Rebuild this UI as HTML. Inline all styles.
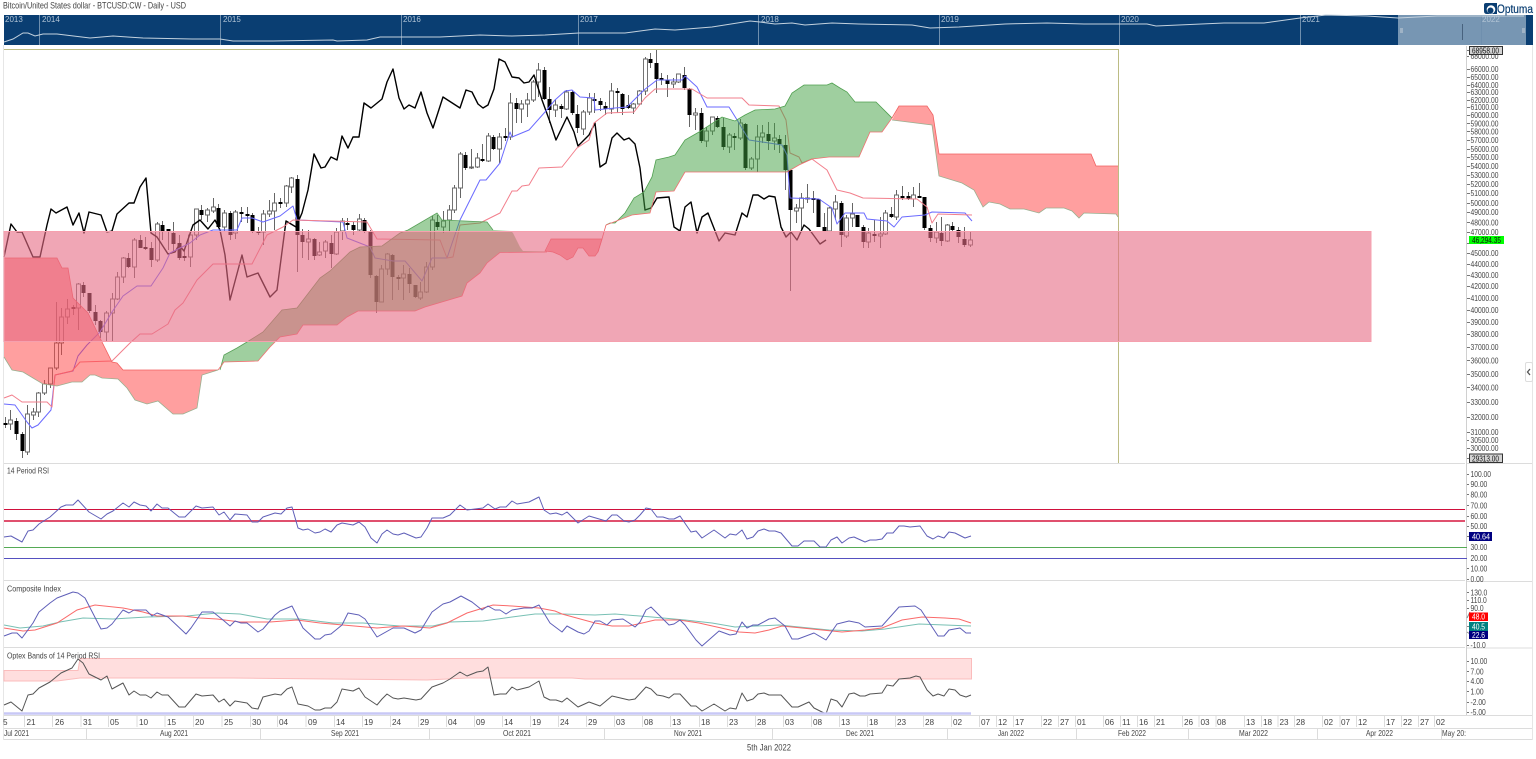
<!DOCTYPE html>
<html><head><meta charset="utf-8"><title>BTCUSD Chart</title>
<style>
html,body{margin:0;padding:0;background:#fff;width:1536px;height:759px;overflow:hidden}
svg{display:block;filter:blur(.35px)}
text{font-family:"Liberation Sans",sans-serif}
</style></head><body>
<svg width="1536" height="759" viewBox="0 0 1536 759" xmlns="http://www.w3.org/2000/svg">
<rect width="1536" height="759" fill="#fff"/>
<text x="3" y="8.500" font-size="9.500" fill="#444" textLength="183" lengthAdjust="spacingAndGlyphs">Bitcoin/United States dollar - BTCUSD:CW - Daily - USD</text>

<!-- navigator -->
<rect x="4" y="15" width="1529" height="30" fill="#0a3e72"/>
<rect x="1398" y="15" width="128" height="30" fill="#7796b3"/>
<path d="M39.500 15V45M220.500 15V45M401.500 15V45M578.500 15V45M758.500 15V45M939.500 15V45M1119.500 15V45M1300.500 15V45M1481.500 15V45" stroke="#6f8fae" stroke-width="1" fill="none"/>
<path d="M1462.500 24V40" stroke="#48627e"/>
<path d="M4 42 13 39 23 33 28 33 35 36 43 34 57 34 90 38 113 36 143 38 192 39 220 39 233 41 273 41 333 40 337 41 367 40 380 37 400 37 440 37 480 35 512 36 545 35 579 33 625 33 655 29 675 30 712 27 750 21 760 22 775 24 792 23 805 25 832 23 859 24 912 25 930 28 959 27 1005 24 1047 23 1084 24 1147 24 1156 26 1224 23 1264 23 1300 18 1326 15 1367 16 1398 18 1437 16 1524 16" fill="none" stroke="#c4d2de" stroke-width="1"/>
<g font-size="8" fill="#b3c5d6">
<text x="5" y="22">2013</text><text x="42" y="22">2014</text><text x="223" y="22">2015</text><text x="403" y="22">2016</text><text x="580" y="22">2017</text><text x="761" y="22">2018</text><text x="941" y="22">2019</text><text x="1121" y="22">2020</text><text x="1302" y="22">2021</text><text x="1482" y="22">2022</text>
</g>
<rect x="1400" y="28" width="3" height="5" fill="#9fb3c6"/><rect x="1522" y="28" width="3" height="5" fill="#9fb3c6"/>

<!-- logo -->
<path d="M1486 3H1497V14H1487Q1484 14 1484 11V5Q1484 3 1486 3Z" fill="#0a3e72"/>
<circle cx="1491" cy="9.500" r="4.300" fill="#fff"/><circle cx="1490.500" cy="10.500" r="3" fill="#0a3e72"/>
<text x="1497" y="13" font-size="11.500" fill="#0a3e72" stroke="#0a3e72" stroke-width=".2" textLength="36" lengthAdjust="spacingAndGlyphs">Optuma</text>

<!-- frame -->
<path d="M3.500 45V740" stroke="#e6e6e6" fill="none"/>
<path d="M1532.500 45V740" stroke="#e6e6e6" fill="none"/>

<!-- candles wicks -->
<path fill="none" stroke="#666" stroke-width="1" d="M5.500 417V428M10.500 410V430M16.500 418V440M22.500 432V458M27.500 405V455M33.500 408V420M38.500 392V417M44.500 380V395M50.500 368V388M56.500 302V370M61.500 308V355M67.500 299V324M73.500 305V315M78.500 283V330M83.500 282V297M89.500 293V313M95.500 305V325M100.500 320V338M106.500 311V342M112.500 293V342M117.500 272V300M123.500 257V283M128.500 253V268M134.500 238V278M140.500 235V248M145.500 237V250M151.500 242V267M157.500 222V262M162.500 221V240M168.500 229V250M173.500 222V253M179.500 235V260M184.500 250V261M190.500 235V267M196.500 209V240M201.500 205V220M207.500 208V222M213.500 198V213M218.500 204V228M224.500 210V232M230.500 211V240M235.500 210V239M241.500 207V222M247.500 207V223M252.500 213V233M258.500 227V235M263.500 210V245M269.500 200V217M274.500 193V230M280.500 198V208M286.500 185V207M291.500 177V193M297.500 175V272M302.500 229V258M308.500 230V260M314.500 238V260M319.500 242V256M325.500 240V258M331.500 235V268M336.500 228V255M342.500 218V240M347.500 218V230M353.500 222V235M359.500 214V232M364.500 218V233M370.500 230V278M376.500 275V313M381.500 265V302M387.500 253V275M392.500 254V300M398.500 275V290M403.500 265V300M409.500 268V293M415.500 285V298M420.500 282V300M426.500 262V293M432.500 216V270M437.500 215V230M443.500 211V233M449.500 205V232M454.500 185V213M460.500 152V198M465.500 152V170M471.500 149V169M477.500 153V168M482.500 144V162M488.500 133V162M493.500 135V150M499.500 133V163M505.500 128V141M510.500 93V140M516.500 98V123M521.500 100V123M527.500 93V117M533.500 80V102M538.500 63V97M544.500 67V100M549.500 87V123M555.500 100V117M561.500 104V118M566.500 90V110M572.500 90V115M577.500 105V133M583.500 110V135M589.500 93V115M594.500 93V113M600.500 98V111M605.500 102V115M611.500 83V114M617.500 88V113M622.500 93V115M628.500 95V109M633.500 103V114M639.500 90V105M645.500 57V95M650.500 53V68M656.500 49V93M661.500 73V85M667.500 75V97M673.500 78V88M678.500 74V83M684.500 67V90M689.500 88V127M695.500 108V130M701.500 108V143M706.500 127V147M712.500 117V135M717.500 116V128M723.500 118V150M729.500 133V153M734.500 133V150M740.500 119V140M745.500 123V170M751.500 157V170M757.500 125V172M762.500 125V143M768.500 122V150M774.500 123V150M779.500 135V153M785.500 135V190M790.500 170V291M796.500 204V223M801.500 193V230M807.500 184V203M813.500 191V213M818.500 199V227M824.500 213V232M829.500 207V232M835.500 195V220M841.500 201V247M846.500 215V238M852.500 203V227M857.500 215V227M863.500 225V248M868.500 228V248M874.500 220V242M880.500 217V248M885.500 210V235M891.500 207V218M896.500 190V220M902.500 186V200M908.500 192V200M913.500 187V207M919.500 183V198M924.500 197V230M930.500 225V242M936.500 222V243M941.500 217V246M947.500 224V242M952.500 222V232M958.500 227V243M964.500 227V247M970.500 232V247"/>
<!-- hollow bodies -->
<path fill="#fff" stroke="#666" stroke-width=".9" d="M8.500 420h4V424h-4zM25.500 414h4V452h-4zM31.500 412h4V415h-4zM36.500 393h4V412h-4zM42.500 384h4V393h-4zM48.500 368h4V384h-4zM54.500 343h4V368h-4zM59.500 317h4V343h-4zM65.500 309h4V317h-4zM76.500 284h4V308h-4zM104.500 313h4V332h-4zM110.500 299h4V313h-4zM115.500 277h4V299h-4zM121.500 258h4V277h-4zM132.500 240h4V267h-4zM155.500 224h4V260h-4zM188.500 235h4V257h-4zM194.500 209h4V235h-4zM205.500 210h4V215h-4zM211.500 207h4V211h-4zM222.500 213h4V227h-4zM233.500 212h4V233h-4zM261.500 214h4V232h-4zM267.500 211h4V214h-4zM272.500 203h4V211h-4zM284.500 186h4V203h-4zM289.500 178h4V187h-4zM306.500 239h4V242h-4zM317.500 252h4V255h-4zM323.500 242h4V251h-4zM334.500 232h4V254h-4zM340.500 221h4V231h-4zM357.500 219h4V230h-4zM379.500 269h4V302h-4zM385.500 254h4V269h-4zM401.500 274h4V278h-4zM418.500 292h4V298h-4zM424.500 267h4V292h-4zM430.500 220h4V267h-4zM441.500 221h4V227h-4zM447.500 210h4V220h-4zM452.500 188h4V210h-4zM458.500 154h4V188h-4zM469.500 167h4V168h-4zM475.500 158h4V167h-4zM486.500 136h4V161h-4zM497.500 137h4V149h-4zM508.500 103h4V137h-4zM519.500 104h4V109h-4zM525.500 100h4V104h-4zM531.500 82h4V100h-4zM536.500 70h4V82h-4zM553.500 105h4V110h-4zM564.500 92h4V109h-4zM581.500 112h4V129h-4zM587.500 98h4V112h-4zM609.500 91h4V109h-4zM631.500 104h4V108h-4zM637.500 91h4V104h-4zM643.500 59h4V91h-4zM671.500 82h4V84h-4zM676.500 74h4V82h-4zM693.500 113h4V115h-4zM704.500 131h4V141h-4zM710.500 117h4V131h-4zM727.500 135h4V147h-4zM738.500 123h4V138h-4zM749.500 159h4V168h-4zM755.500 137h4V159h-4zM760.500 133h4V137h-4zM772.500 138h4V141h-4zM794.500 208h4V211h-4zM799.500 198h4V208h-4zM805.500 198h4V199h-4zM827.500 208h4V231h-4zM833.500 202h4V209h-4zM844.500 218h4V236h-4zM850.500 214h4V218h-4zM866.500 233h4V242h-4zM878.500 234h4V236h-4zM883.500 213h4V234h-4zM894.500 195h4V217h-4zM911.500 195h4V199h-4zM934.500 232h4V238h-4zM945.500 225h4V241h-4zM968.500 240h4V245h-4z"/>
<!-- filled bodies -->
<path fill="#000" d="M3.500 423h4v2h-4zM14.500 421h4V434h-4zM20.500 434h4V451h-4zM71.500 307h4v2h-4zM81.500 285h4V293h-4zM87.500 293h4V311h-4zM93.500 312h4V321h-4zM98.500 321h4V332h-4zM126.500 258h4V267h-4zM138.500 240h4V248h-4zM143.500 247h4v2h-4zM149.500 248h4V260h-4zM160.500 225h4V232h-4zM166.500 229h4v2h-4zM171.500 233h4V244h-4zM177.500 243h4V258h-4zM182.500 256h4v2h-4zM199.500 210h4V215h-4zM216.500 208h4V227h-4zM228.500 213h4V235h-4zM239.500 212h4v2h-4zM245.500 214h4v2h-4zM250.500 215h4V232h-4zM256.500 231h4v2h-4zM278.500 202h4v2h-4zM295.500 179h4V235h-4zM300.500 235h4V242h-4zM312.500 239h4V256h-4zM329.500 243h4V254h-4zM345.500 223h4V225h-4zM351.500 225h4V230h-4zM362.500 220h4V231h-4zM368.500 232h4V275h-4zM374.500 276h4V302h-4zM390.500 255h4V277h-4zM396.500 277h4v2h-4zM407.500 274h4V284h-4zM413.500 285h4V297h-4zM435.500 222h4V227h-4zM463.500 155h4V168h-4zM480.500 159h4v2h-4zM491.500 137h4V149h-4zM503.500 136h4v2h-4zM514.500 103h4V109h-4zM542.500 70h4V99h-4zM547.500 99h4V110h-4zM559.500 106h4V109h-4zM570.500 92h4V113h-4zM575.500 114h4V128h-4zM592.500 99h4V101h-4zM598.500 101h4V105h-4zM603.500 106h4V109h-4zM615.500 91h4V93h-4zM620.500 94h4V109h-4zM626.500 105h4V108h-4zM648.500 59h4V63h-4zM654.500 63h4V79h-4zM659.500 78h4v2h-4zM665.500 80h4V84h-4zM682.500 75h4V88h-4zM687.500 89h4V115h-4zM699.500 113h4V141h-4zM715.500 118h4V127h-4zM721.500 127h4V147h-4zM732.500 136h4V138h-4zM743.500 124h4V168h-4zM766.500 134h4V141h-4zM777.500 139h4V144h-4zM783.500 145h4V170h-4zM788.500 170h4V210h-4zM811.500 198h4v2h-4zM816.500 199h4V227h-4zM822.500 227h4V231h-4zM839.500 203h4V235h-4zM855.500 215h4V227h-4zM861.500 227h4V242h-4zM872.500 234h4v2h-4zM889.500 214h4V217h-4zM900.500 196h4v2h-4zM906.500 196h4V199h-4zM917.500 196h4v2h-4zM922.500 197h4V228h-4zM928.500 228h4V238h-4zM939.500 233h4V241h-4zM950.500 226h4V230h-4zM956.500 230h4V237h-4zM962.500 239h4V245h-4z"/>

<!-- chikou -->
<path fill="none" stroke="#000" stroke-width="1.400" stroke-linejoin="round" d="M4 257 11 224 17 232 22 232 33 257 40 257 47 225 51 209 56 213 67 207 73 225 79 213 84 233 89 212 101 215 107 232 112 231 117 214 129 203 134 203 140 187 146 178 151 233 157 237 168 254 175 252 179 245 184 251 193 225 200 220 208 229 215 220 220 230 225 255 230 300 242 255 247 277 258 273 270 297 277 290 286 221 296 227 302 213 308 190 314 154 321 168 325 167 331 157 337 160 342 136 348 148 353 137 359 137 364 103 371 108 382 99 387 82 393 69 399 98 404 109 409 105 415 108 421 92 427 113 433 128 443 97 460 108 466 90 472 92 478 104 483 108 488 105 494 89 499 59 505 62 512 77 519 78 524 83 529 82 534 75 542 100 550 122 556 140 567 117 574 132 578 146 584 140 589 135 595 123 600 167 606 163 612 138 617 133 624 140 629 138 635 144 640 168 645 210 651 208 657 198 669 197 674 227 680 231 685 207 691 202 697 233 702 217 708 213 719 241 725 233 735 235 742 213 747 217 753 195 758 195 764 199 769 196 775 197 781 227 786 237 791 232 797 240 804 225 809 229 820 244 826 240"/>
<!-- tenkan -->
<path fill="none" stroke="#6a6aff" stroke-width="1" stroke-linejoin="round" d="M4 404 15 405 27 422 32 428 38 425 51 410 55 375 73 371 78 356 87 345 100 332 112 312 123 296 137 286 151 286 163 268 170 253 190 243 200 235 213 230 237 230 242 218 252 218 263 222 280 216 293 206 297 220 343 222 347 238 370 247 375 258 393 261 405 261 422 281 432 258 447 258 460 220 480 180 486 180 500 163 510 132 512 137 529 130 545 112 555 100 565 91 572 90 580 97 594 98 595 110 615 108 627 107 644 90 657 80 682 80 685 76 697 87 707 107 729 107 739 123 749 140 769 143 782 145 787 155 790 198 819 199 832 208 837 224 845 213 864 213 867 219 887 221 894 227 902 217 925 215 932 212 965 213 972 221"/>
<!-- kijun -->
<path fill="none" stroke="#f27f8c" stroke-width="1" stroke-linejoin="round" d="M4 398 12 395 22 402 47 402 52 407 55 375 72 371 80 362 112 361 130 343 140 334 152 334 168 324 175 310 183 303 197 280 213 264 252 264 267 235 283 227 293 220 367 222 377 239 440 240 447 258 453 257 460 225 480 223 500 213 512 191 517 191 522 186 529 185 539 168 562 167 577 148 589 140 594 123 607 113 634 112 645 98 655 89 692 89 707 98 742 98 749 105 779 106 786 120 790 153 799 157 802 163 812 159 827 170 837 190 850 193 863 198 917 199 927 207 932 223 938 214 972 215"/>

<!-- olive border -->
<path d="M4 49.500H1118.500V463" fill="none" stroke="#bcbc84" stroke-width="1"/>

<!-- cloud red left -->
<path fill="#ff4040" fill-opacity=".5" d="M4 258 57 258 62 268 68 268 73 298 88 313 100 338 112 362 117 363 123 370 218 370 202 375 197 408 183 414 173 414 158 401 147 404 135 400 127 388 118 379 102 378 95 375 90 375 82 382 72 382 57 386 43 384 33 378 23 372 12 370 4 357z"/>
<path fill="none" stroke="#f26060" stroke-width=".8" d="M4 258 57 258 62 268 68 268 73 298 88 313 100 338 112 362 117 363 123 370 218 370"/>
<path fill="none" stroke="#9ab090" stroke-width=".8" d="M4 357 12 370 23 372 33 378 43 384 57 386 72 382 82 382 90 375 95 375 102 378 118 379 127 388 135 400 147 404 158 401 173 414 183 414 197 408 202 375 218 370"/>
<!-- cloud green -->
<path fill="#40a040" fill-opacity=".5" d="M220 370 224 355 237 348 247 342 263 332 282 310 297 308 320 278 330 271 350 252 360 247 382 246 400 233 408 230 437 213 442 220 487 222 493 230 511 231 513 233 520 247 523 251 545 251.500 545 252.500 500 252.500 487 263 480 273 467 283 462 296 425 307 415 311 358 311 347 317 337 325 303 325 297 334 280 337 270 347 258 361 224 362z"/>
<path fill="none" stroke="#58a058" stroke-width=".8" d="M220 370 224 355 237 348 247 342 263 332 282 310 297 308 320 278 330 271 350 252 360 247 382 246 400 233 408 230 437 213 442 220 487 222 493 230"/>
<path fill="none" stroke="#f07070" stroke-width=".8" d="M218 370 224 362 258 361 270 347 280 337 297 334 303 325 337 325 347 317 358 311 415 311 425 307 462 296 467 283 480 273 487 263 500 252.500 547 252"/>
<!-- small red -->
<path fill="#ff4040" fill-opacity=".5" stroke="#f06060" stroke-width=".7" d="M545 251 551 239 602 239 598 252 595 256 589 256 583 248 578 248 573 257 567 260 560 255 553 252z"/>
<path fill="none" stroke="#f06060" stroke-width=".8" d="M598 252 602 239 606 225"/>
<!-- cloud green 2 -->
<path fill="#40a040" fill-opacity=".5" d="M606 225 610 223 615 223 625 213 634 198 644 192 652 177 656 160 669 157 675 155 685 140 699 132 722 117 735 121 745 115 755 110 775 109 785 106 792 93 804 85 827 85 832 83 840 88 847 92 855 102 876 102 892 118 882 132 870 132 859 157 829 157 812 159 799 165 787 172 685 172 674 191 656 192 650 213 632 215z"/>
<path fill="none" stroke="#50a050" stroke-width=".8" d="M606 225 610 223 615 223 625 213 634 198 644 192 652 177 656 160 669 157 675 155 685 140 699 132 722 117 735 121 745 115 755 110 775 109 785 106 792 93 804 85 827 85 832 83 840 88 847 92 855 102 876 102 892 118"/>
<path fill="none" stroke="#f07070" stroke-width=".8" d="M606 225 632 215 650 213 656 192 674 191 685 172 787 172 799 165 812 159 829 157 859 157 870 132 882 132 892 118"/>
<!-- cloud red right -->
<path fill="#ff4040" fill-opacity=".5" d="M892 120 899 106 927 106 933 115 939 154 1091 154 1096 166 1118 166 1118 217 1116 214 1084 213 1079 218 1072 211 1064 208 1046 208 1039 213 1024 209 1010 209 1000 204 989 202 983 207 974 190 962 183 939 176 932 125z"/>
<path fill="none" stroke="#f06060" stroke-width=".8" d="M892 118 899 106 927 106 933 115 939 154 1091 154 1096 166 1118 166"/>
<path fill="none" stroke="#9ab090" stroke-width=".8" d="M892 120 932 125 939 176 962 183 974 190 983 207 989 202 1000 204 1010 209 1024 209 1039 213 1046 208 1064 208 1072 211 1079 218 1084 213 1116 214 1118 217"/>

<!-- big pink rect -->
<rect x="4" y="231.500" width="1367" height="110" fill="#e66b84" fill-opacity=".6" stroke="#f6a0ae" stroke-width="1"/>

<!-- dividers -->
<path d="M4 463.500H1465M4 580.500H1465M4 647.500H1465M4 715.500H1532M4 728.500H1466M4 739.500H1532M1466 463.500H1532M1466 581.500H1532M1466 648H1532M1466 728.500H1532" stroke="#dcdcdc" fill="none"/>
<path d="M1466.500 46V715" stroke="#d0d0d0" fill="none"/>

<!-- RSI -->
<path d="M4 509.500H1465" stroke="#d0103c" stroke-width="1.100" fill="none"/>
<path d="M4 521H1465" stroke="#e0506e" stroke-width="2" fill="none"/>
<path d="M4 547.500H1467" stroke="#55aa55" stroke-width="1.100" fill="none"/>
<path d="M4 558.500H1467" stroke="#5550c0" stroke-width="1.100" fill="none"/>
<path fill="none" stroke="#5f5fb8" stroke-width="1" stroke-linejoin="round" d="M4 537 11 536 22 542 28 531 33 530 39 524 50 517 61 507 66 505 73 505 78 500 89 512 101 519 107 514 113 511 123 503 129 507 134 502 140 505 146 506 151 511 157 504 162 508 168 508 179 517 185 517 196 506 202 508 213 507 219 515 224 512 230 520 235 514 247 515 252 522 258 522 263 517 275 513 281 514 287 508 292 507 298 528 303 530 308 529 315 533 320 532 325 529 331 532 337 525 342 523 353 525 359 522 365 527 371 538 377 543 382 534 387 530 393 534 398 535 404 533 416 538 421 537 427 528 432 518 443 518 450 515 460 505 467 510 475 509 483 508 488 504 495 509 500 507 506 507 512 501 517 504 529 502 539 497 544 510 550 514 556 513 562 515 567 512 578 523 589 516 606 521 612 515 617 515 624 521 629 522 635 520 640 515 646 508 651 509 657 517 663 517 669 519 674 519 680 516 691 532 696 531 702 538 714 530 725 538 730 534 736 535 742 530 747 539 753 537 758 531 764 529 769 531 775 531 781 533 792 546 798 546 804 541 814 541 820 547 826 547 831 540 837 537 842 543 849 538 854 537 865 542 870 540 876 540 882 539 887 533 893 533 899 526 904 526 910 527 920 526 927 536 933 539 938 536 944 538 949 532 955 533 965 538 971 536"/>

<!-- Composite -->
<path fill="none" stroke="#78c0b4" stroke-width="1" d="M4 625 20 628 43 626 60 622 83 618 113 619 147 617 187 616 217 613 240 614 267 619 300 619 333 623 363 623 400 626 433 626 450 622 483 621 512 617 535 614 562 614 595 615 615 614 652 617 685 620 712 623 735 627 779 625 829 630 862 631 885 629 919 624 945 625 971 626"/>
<path fill="none" stroke="#fa6a6a" stroke-width="1" d="M4 628 23 631 35 630 57 623 77 610 95 605 123 608 143 612 157 616 183 616 200 618 217 619 240 622 270 622 297 620 320 623 343 625 377 628 403 626 430 628 447 623 467 613 493 605 512 606 539 608 555 611 562 614 595 623 612 626 629 626 655 620 679 620 699 623 739 632 755 633 769 630 782 626 812 629 842 632 865 630 882 628 902 620 922 617 945 618 959 619 971 623"/>
<path fill="none" stroke="#5f5fb8" stroke-width="1" stroke-linejoin="round" d="M4 636 12 633 17 633 22 638 33 623 39 612 50 603 57 598 73 592 78 593 85 598 101 629 107 628 112 624 123 610 129 613 134 610 146 610 152 616 157 613 168 617 186 634 191 628 202 612 213 612 223 620 230 626 235 621 241 623 247 623 258 632 263 629 275 615 280 611 292 606 303 628 315 639 320 639 325 635 331 634 342 625 348 613 359 615 365 619 377 637 393 628 404 628 415 633 421 630 432 612 443 604 450 602 461 596 472 602 482 610 488 606 495 610 500 610 506 614 512 610 524 608 532 608 539 605 550 623 562 632 567 626 578 632 584 634 589 631 595 621 600 621 607 625 612 620 623 619 635 627 640 622 646 610 651 607 669 625 674 624 680 620 685 625 696 640 702 646 719 631 730 635 736 634 742 622 747 628 753 625 758 625 769 619 775 618 785 626 792 639 798 639 814 633 826 640 837 624 849 621 859 623 865 627 882 626 899 607 915 606 921 610 938 636 944 636 949 630 960 628 966 633 971 633"/>

<!-- Optex -->
<path fill="#ffdede" stroke="#fbbcbc" stroke-width="1" d="M4 670.500H78L80 658.500H971.500V679H875L585 679 572 678 467 678 427 680 233 678 100 678 80 678 57 681H4z"/>
<path fill="none" stroke="#555" stroke-width="1" stroke-linejoin="round" d="M4 705 11 702 22 711 28 695 33 694 39 688 50 682 61 673 72 668 78 659 83 663 89 674 101 680 107 676 112 689 123 683 129 695 134 691 140 695 146 695 151 698 157 692 162 695 168 695 179 707 185 707 196 694 202 696 213 695 219 702 224 699 230 706 235 701 247 703 252 708 258 709 263 697 275 694 281 695 287 689 292 687 298 704 308 706 315 710 320 710 325 708 331 708 337 702 342 689 353 691 359 688 365 697 377 705 382 699 387 694 393 698 398 699 404 698 416 700 421 699 432 687 443 683 450 679 460 672 467 676 477 672 483 671 488 667 494 695 500 694 506 694 512 687 517 690 529 687 539 681 544 697 550 700 556 700 562 702 567 698 578 707 589 702 600 706 612 696 629 700 635 699 646 687 651 689 657 695 663 696 669 698 674 694 680 694 691 706 696 706 702 711 714 704 725 711 730 708 736 709 742 693 747 701 753 699 758 694 764 693 769 695 781 695 792 707 798 707 809 702 814 708 826 714 831 699 837 701 842 707 849 694 854 693 860 696 865 696 870 694 882 693 887 685 893 686 899 679 910 678 916 676 920 677 927 690 933 696 938 694 944 696 949 689 955 690 960 695 966 697 971 695"/>
<path d="M4 713.500H971" stroke="#c8c8f6" stroke-width="2.500" fill="none"/>

<!-- panel titles -->
<g font-size="8.500" fill="#444">
<text x="7" y="473.500" textLength="42" lengthAdjust="spacingAndGlyphs">14 Period RSI</text>
<text x="7" y="591.500" textLength="54" lengthAdjust="spacingAndGlyphs">Composite Index</text>
<text x="7" y="658.500" textLength="93" lengthAdjust="spacingAndGlyphs">Optex Bands of 14 Period RSI</text>
</g>

<!-- axis ticks -->
<path stroke="#777" stroke-width="1" fill="none" d="M1467 50.500H1469M1467 56.500H1469M1467 69.500H1470M1467 77.500H1470M1467 85.500H1470M1467 92.500H1470M1467 100.500H1470M1467 107.500H1470M1467 115.500H1470M1467 123.500H1470M1467 131.500H1470M1467 140.500H1470M1467 149.500H1470M1467 157.500H1470M1467 166.500H1470M1467 175.500H1470M1467 184.500H1470M1467 193.500H1470M1467 203.500H1470M1467 212.500H1470M1467 222.500H1470M1467 232.500H1470M1467 243.500H1469M1467 253.500H1470M1467 264.500H1470M1467 275.500H1470M1467 286.500H1470M1467 298.500H1470M1467 310.500H1470M1467 322.500H1470M1467 334.500H1470M1467 347.500H1470M1467 360.500H1470M1467 374.500H1470M1467 387.500H1470M1467 402.500H1470M1467 417.500H1470M1467 432.500H1470M1467 440.500H1469M1467 448.500H1470M1467 458.500H1470M1467 474.500H1469M1467 484.500H1469M1467 494.500H1469M1467 505.500H1469M1467 516.500H1469M1467 526.500H1469M1467 536.500H1470M1467 568.500H1469M1467 579.500H1469M1467 592.500H1469M1467 600.500H1469M1467 608.500H1469M1467 645.500H1469M1467 661.500H1469M1467 671.500H1469M1467 681.500H1469M1467 691.500H1469M1467 702.500H1469M1467 712.500H1469"/>
<path d="M1467 618 1470 612M1467 626.500H1470M1467 632 1470 634" stroke="#888" fill="none"/>

<!-- axis labels -->
<g transform="translate(1470.500 0) scale(.78 1)" font-size="8.600" fill="#444">
<text y="59">68000.00</text>
<text y="72">66000.00</text><text y="80">65000.00</text><text y="88">64000.00</text><text y="95">63000.00</text><text y="103">62000.00</text><text y="110">61000.00</text><text y="118">60000.00</text><text y="126.500">59000.00</text><text y="134.500">58000.00</text><text y="143">57000.00</text><text y="152">56000.00</text><text y="160">55000.00</text><text y="169">54000.00</text><text y="178">53000.00</text><text y="187">52000.00</text><text y="196">51000.00</text><text y="206">50000.00</text><text y="215">49000.00</text><text y="225.500">48000.00</text><text y="235">47000.00</text>
<text y="256">45000.00</text><text y="267">44000.00</text><text y="278">43000.00</text><text y="289">42000.00</text><text y="301">41000.00</text><text y="313">40000.00</text><text y="325">39000.00</text><text y="337">38000.00</text><text y="350">37000.00</text><text y="363.500">36000.00</text><text y="377">35000.00</text><text y="390.500">34000.00</text><text y="405">33000.00</text><text y="420">32000.00</text><text y="435">31000.00</text><text y="443">30500.00</text><text y="451">30000.00</text>
<text y="477">100.00</text><text y="487">90.00</text><text y="497.500">80.00</text><text y="508.500">70.00</text><text y="519">60.00</text><text y="529">50.00</text><text y="550">30.00</text><text y="561">20.00</text><text y="571.500">10.00</text><text y="582">0.00</text>
<text y="595.500">130.0</text><text y="603">110.0</text><text y="611">90.0</text><text y="648">-10.0</text>
<text y="664">10.00</text><text y="674.500">7.00</text><text y="684">4.00</text><text y="694.500">1.00</text><text y="705">-2.00</text><text y="715">-5.00</text>
</g>

<!-- value boxes -->
<rect x="1469.500" y="46.500" width="33" height="8" fill="#d4d4d4" stroke="#333"/>
<rect x="1469.500" y="454" width="33" height="8.500" fill="#d4d4d4" stroke="#333"/>
<rect x="1469" y="236" width="35" height="8" fill="#00ff00"/>
<rect x="1469" y="532" width="23" height="9" fill="#000080"/>
<rect x="1469" y="612.500" width="19" height="8.500" fill="#ff0000"/>
<rect x="1469" y="622" width="19" height="9" fill="#008080"/>
<rect x="1469" y="631" width="19" height="8" fill="#000080"/>
<g font-size="8.600">
<text x="1472" y="53.500" fill="#111" textLength="27" lengthAdjust="spacingAndGlyphs">68958.00</text>
<text x="1472" y="461.500" fill="#111" textLength="27" lengthAdjust="spacingAndGlyphs">29313.00</text>
<text x="1472" y="243" fill="#111" textLength="29" lengthAdjust="spacingAndGlyphs">46,294.35</text>
<text x="1472" y="539.500" fill="#fff" textLength="18" lengthAdjust="spacingAndGlyphs">40.64</text>
<text x="1472" y="619.500" fill="#fff" textLength="13" lengthAdjust="spacingAndGlyphs">48.0</text>
<text x="1472" y="629.500" fill="#fff" textLength="13" lengthAdjust="spacingAndGlyphs">40.5</text>
<text x="1472" y="638" fill="#fff" textLength="13" lengthAdjust="spacingAndGlyphs">22.6</text>
</g>

<!-- collapse tab -->
<rect x="1525.500" y="362.500" width="7" height="19" rx="1.500" fill="#fff" stroke="#ddd"/>
<path d="M1530 369 1527.500 372 1530 375" fill="none" stroke="#555" stroke-width="1.300"/>

<!-- date ticks -->
<path stroke="#dcdcdc" fill="none" d="M24.500 716V727M52.500 716V727M81 716V727M108.500 716V727M137 716V727M165 716V727M193.500 716V727M222 716V727M250.500 716V727M277.500 716V727M306 716V727M334.500 716V727M362.500 716V727M390.500 716V727M418.500 716V727M446.500 716V727M474.500 716V727M502.500 716V727M530.500 716V727M558.500 716V727M586.500 716V727M614.500 716V727M642.500 716V727M670.500 716V727M699.500 716V727M727.500 716V727M755.500 716V727M783.500 716V727M811.500 716V727M839.500 716V727M867.500 716V727M895.500 716V727M923.500 716V727M951.500 716V727M979.500 716V727M996.500 716V727M1013.500 716V727M1041.500 716V727M1058.500 716V727M1075.500 716V727M1103.500 716V727M1120.500 716V727M1137.500 716V727M1154.500 716V727M1182.500 716V727M1199 716V727M1216 716V727M1244.500 716V727M1261.500 716V727M1278 716V727M1294.500 716V727M1322.500 716V727M1340 716V727M1356.500 716V727M1384.500 716V727M1401.500 716V727M1418.500 716V727M1434.500 716V727M86.500 729V739M260.500 729V739M429.500 729V739M604.500 729V739M772.500 729V739M947.500 729V739M1076.500 729V739M1188.500 729V739M1317.500 729V739M1441.500 729V739"/>

<!-- date labels -->
<g font-size="8.200" fill="#444">
<text x="3" y="725">5</text><text x="26.500" y="725">21</text><text x="55" y="725">26</text><text x="83" y="725">31</text><text x="110" y="725">05</text><text x="139" y="725">10</text><text x="167" y="725">15</text><text x="195" y="725">20</text><text x="224" y="725">25</text><text x="252" y="725">30</text><text x="279" y="725">04</text><text x="308" y="725">09</text><text x="336" y="725">14</text><text x="364" y="725">19</text><text x="392" y="725">24</text><text x="420" y="725">29</text><text x="448" y="725">04</text><text x="476" y="725">09</text><text x="504" y="725">14</text><text x="532" y="725">19</text><text x="560" y="725">24</text><text x="588" y="725">29</text><text x="616" y="725">03</text><text x="644" y="725">08</text><text x="672" y="725">13</text><text x="701" y="725">18</text><text x="729" y="725">23</text><text x="757" y="725">28</text><text x="785" y="725">03</text><text x="813" y="725">08</text><text x="841" y="725">13</text><text x="869" y="725">18</text><text x="897" y="725">23</text><text x="925" y="725">28</text><text x="953" y="725">02</text><text x="981" y="725">07</text><text x="998" y="725">12</text><text x="1015" y="725">17</text><text x="1043" y="725">22</text><text x="1060" y="725">27</text><text x="1077" y="725">01</text><text x="1105" y="725">06</text><text x="1122" y="725">11</text><text x="1139" y="725">16</text><text x="1156" y="725">21</text><text x="1184" y="725">26</text><text x="1200.500" y="725">03</text><text x="1217" y="725">08</text><text x="1246" y="725">13</text><text x="1263" y="725">18</text><text x="1279.500" y="725">23</text><text x="1296" y="725">28</text><text x="1324" y="725">02</text><text x="1341" y="725">07</text><text x="1358" y="725">12</text><text x="1386" y="725">17</text><text x="1403" y="725">22</text><text x="1420" y="725">27</text><text x="1436" y="725">02</text>
<text x="4" y="736" textLength="25" lengthAdjust="spacingAndGlyphs">Jul 2021</text>
<text x="160" y="736" textLength="28" lengthAdjust="spacingAndGlyphs">Aug 2021</text>
<text x="331" y="736" textLength="28" lengthAdjust="spacingAndGlyphs">Sep 2021</text>
<text x="503" y="736" textLength="28" lengthAdjust="spacingAndGlyphs">Oct 2021</text>
<text x="674" y="736" textLength="28" lengthAdjust="spacingAndGlyphs">Nov 2021</text>
<text x="846" y="736" textLength="28" lengthAdjust="spacingAndGlyphs">Dec 2021</text>
<text x="998" y="736" textLength="26" lengthAdjust="spacingAndGlyphs">Jan 2022</text>
<text x="1118" y="736" textLength="28" lengthAdjust="spacingAndGlyphs">Feb 2022</text>
<text x="1239" y="736" textLength="29" lengthAdjust="spacingAndGlyphs">Mar 2022</text>
<text x="1366" y="736" textLength="27" lengthAdjust="spacingAndGlyphs">Apr 2022</text>
<text x="1442" y="736" textLength="24" lengthAdjust="spacingAndGlyphs">May 20:</text>
<text x="747" y="750.500" font-size="9" textLength="44" lengthAdjust="spacingAndGlyphs">5th Jan 2022</text>
</g>
</svg>
</body></html>
